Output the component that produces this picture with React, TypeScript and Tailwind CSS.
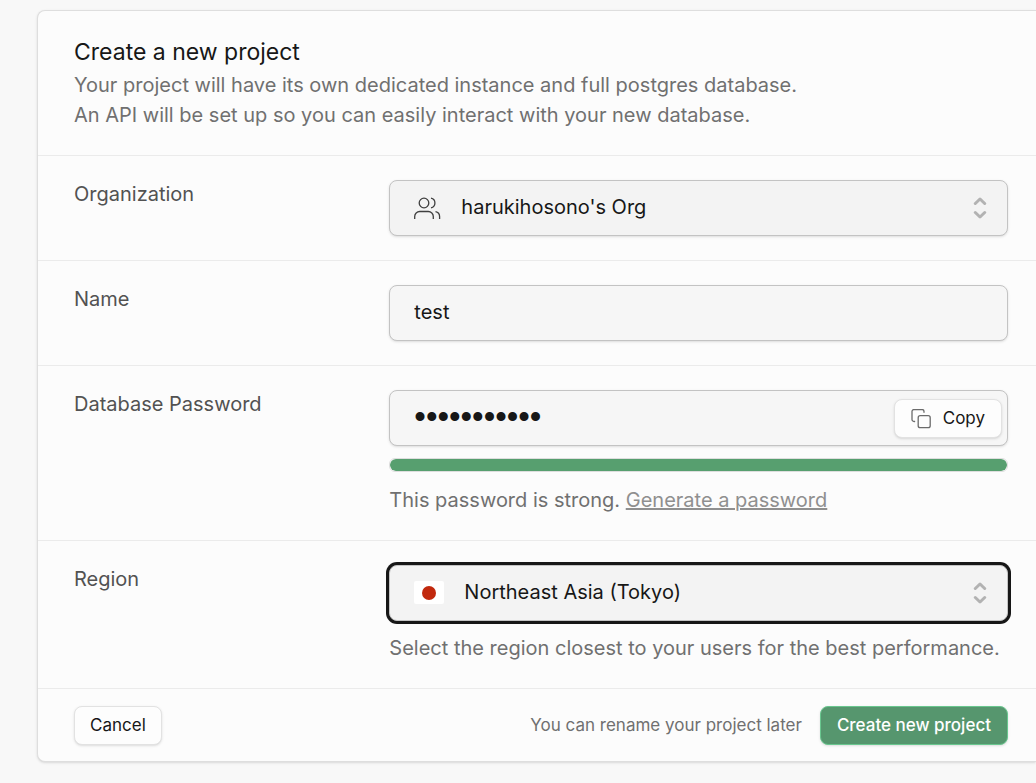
import { useState, type ReactNode } from "react";

const fieldClasses =
  "block h-14 w-full appearance-none rounded-lg border border-[#c3c3c3] px-6 pb-0.5 text-[#171717] shadow-sm outline-none";

const smallButton =
  "flex h-[39px] items-center rounded-lg border text-[17px] shadow-sm";

const Row = ({
  id,
  label,
  children,
}: {
  id: string;
  label: string;
  children: ReactNode;
}) => {
  return (
    <div className="grid grid-cols-3 gap-3 border-t border-[#ebebeb] py-6 pl-9 pr-7">
      <label htmlFor={id} className="text-[20px] leading-7 text-[#525252]">
        {label}
      </label>
      <div className="col-span-2">{children}</div>
    </div>
  );
};

const UpDown = () => {
  return (
    <svg
      className="pointer-events-none absolute right-[21px] top-[17px] h-[22px] w-[14px]"
      viewBox="0 0 14 22"
      fill="none"
      stroke="#b2b2b2"
      strokeWidth="3"
      strokeLinecap="round"
      strokeLinejoin="round"
    >
      <path d="M2.3 6.5 7 2l4.7 4.5" />
      <path d="M2.3 15.5 7 20l4.7-4.5" />
    </svg>
  );
};

const UsersIcon = () => {
  return (
    <svg
      className="pointer-events-none absolute left-6 top-4 h-7 w-7"
      viewBox="0 0 28 28"
      fill="none"
      stroke="#3f3f3f"
      strokeWidth="1.3"
    >
      <circle cx="11" cy="7" r="4.8" />
      <path d="M1.7 23v-2.5a5 5 0 0 1 5-5h8.6a5 5 0 0 1 5 5V23" />
      <path d="M18 2.2a4.9 4.9 0 0 1 0 9.6" />
      <path d="M22.5 15.6a5 5 0 0 1 4.1 4.9V23" />
    </svg>
  );
};

const CopyIcon = () => {
  return (
    <svg
      className="h-5 w-5"
      viewBox="0 0 20 20"
      fill="none"
      stroke="#6b6b6b"
      strokeWidth="1.3"
      strokeLinecap="round"
    >
      <rect x="7.2" y="6.7" width="12" height="12" rx="2" />
      <path d="M3.6 12.5H3a2 2 0 0 1-2-2v-8a2 2 0 0 1 2-2h8a2 2 0 0 1 2 2v.8" />
    </svg>
  );
};

const App = () => {
  const [name, setName] = useState("test");
  const [password, setPassword] = useState("supersecret");

  return (
    <div className="min-h-screen bg-[#f8f8f8] pb-5 pl-[37px] pt-2.5 font-['Inter',sans-serif]">
      <form
        className="rounded-l-lg border-y border-l border-[#dedede] bg-[#fcfcfc] shadow-sm"
        onSubmit={(e) => e.preventDefault()}
      >
        <div className="pb-[25px] pl-9 pr-7 pt-[23px]">
          <h1 className="text-[23px] leading-9 text-[#171717]">
            Create a new project
          </h1>
          <p className="text-[20px] leading-[30px] text-[#707070]">
            Your project will have its own dedicated instance and full postgres
            database.
            <br />
            An API will be set up so you can easily interact with your new
            database.
          </p>
        </div>

        <Row id="organization" label="Organization">
          <div className="relative">
            <select
              id="organization"
              className={`${fieldClasses} bg-[#f3f3f3] pl-[71px] text-[20px]`}
            >
              <option>harukihosono's Org</option>
            </select>
            <UsersIcon />
            <UpDown />
          </div>
        </Row>

        <Row id="name" label="Name">
          <input
            id="name"
            type="text"
            className={`${fieldClasses} bg-[#f6f6f6] text-[20px]`}
            value={name}
            onChange={(e) => setName(e.target.value)}
          />
        </Row>

        <Row id="password" label="Database Password">
          <div className="relative">
            <input
              id="password"
              type="password"
              className={`${fieldClasses} bg-[#f6f6f6] font-['Liberation_Sans',sans-serif] text-[33px]`}
              value={password}
              onChange={(e) => setPassword(e.target.value)}
            />
            <button
              type="button"
              className={`${smallButton} absolute right-1.5 top-[9px] gap-3 border-[#e2e2e2] bg-[#fdfdfd] px-4 text-[#171717]`}
            >
              <CopyIcon />
              Copy
            </button>
          </div>
          <div className="mt-3 h-3.5 overflow-hidden rounded-md border border-[#dedede]">
            <div className="h-full w-full rounded-md bg-[#579f6f]" />
          </div>
          <p className="mt-[13px] pb-px text-[20px] leading-[30px] text-[#707070]">
            This password is strong.{" "}
            <a href="#generate" className="text-[#8f8f8f] underline">
              Generate a password
            </a>
          </p>
        </Row>

        <Row id="region" label="Region">
          <div className="relative">
            <select
              id="region"
              className={`${fieldClasses} bg-[#f3f3f3] pl-[74px] text-[20px] ring-3 ring-[#171717]`}
            >
              <option>Northeast Asia (Tokyo)</option>
            </select>
            <span className="pointer-events-none absolute left-[25px] top-4 flex h-[23px] w-[30px] items-center justify-center rounded-xs bg-white">
              <span className="h-3.5 w-3.5 rounded-full bg-[#c1280d]" />
            </span>
            <UpDown />
          </div>
          <p className="mt-3 pb-px text-[20px] leading-[30px] text-[#707070]">
            Select the region closest to your users for the best performance.
          </p>
        </Row>

        <div className="flex items-center justify-between border-t border-[#ebebeb] pb-4 pl-9 pr-7 pt-[17px]">
          <button
            type="button"
            className={`${smallButton} border-[#e2e2e2] bg-[#fdfdfd] px-[15px] text-[#171717]`}
          >
            Cancel
          </button>
          <div className="flex items-center gap-[18px]">
            <p className="text-[17px] text-[#707070]">
              You can rename your project later
            </p>
            <button
              type="submit"
              className={`${smallButton} border-[#69c78f] bg-[#56966e] px-4 font-medium text-white`}
            >
              Create new project
            </button>
          </div>
        </div>
      </form>
    </div>
  );
};

export default App;
